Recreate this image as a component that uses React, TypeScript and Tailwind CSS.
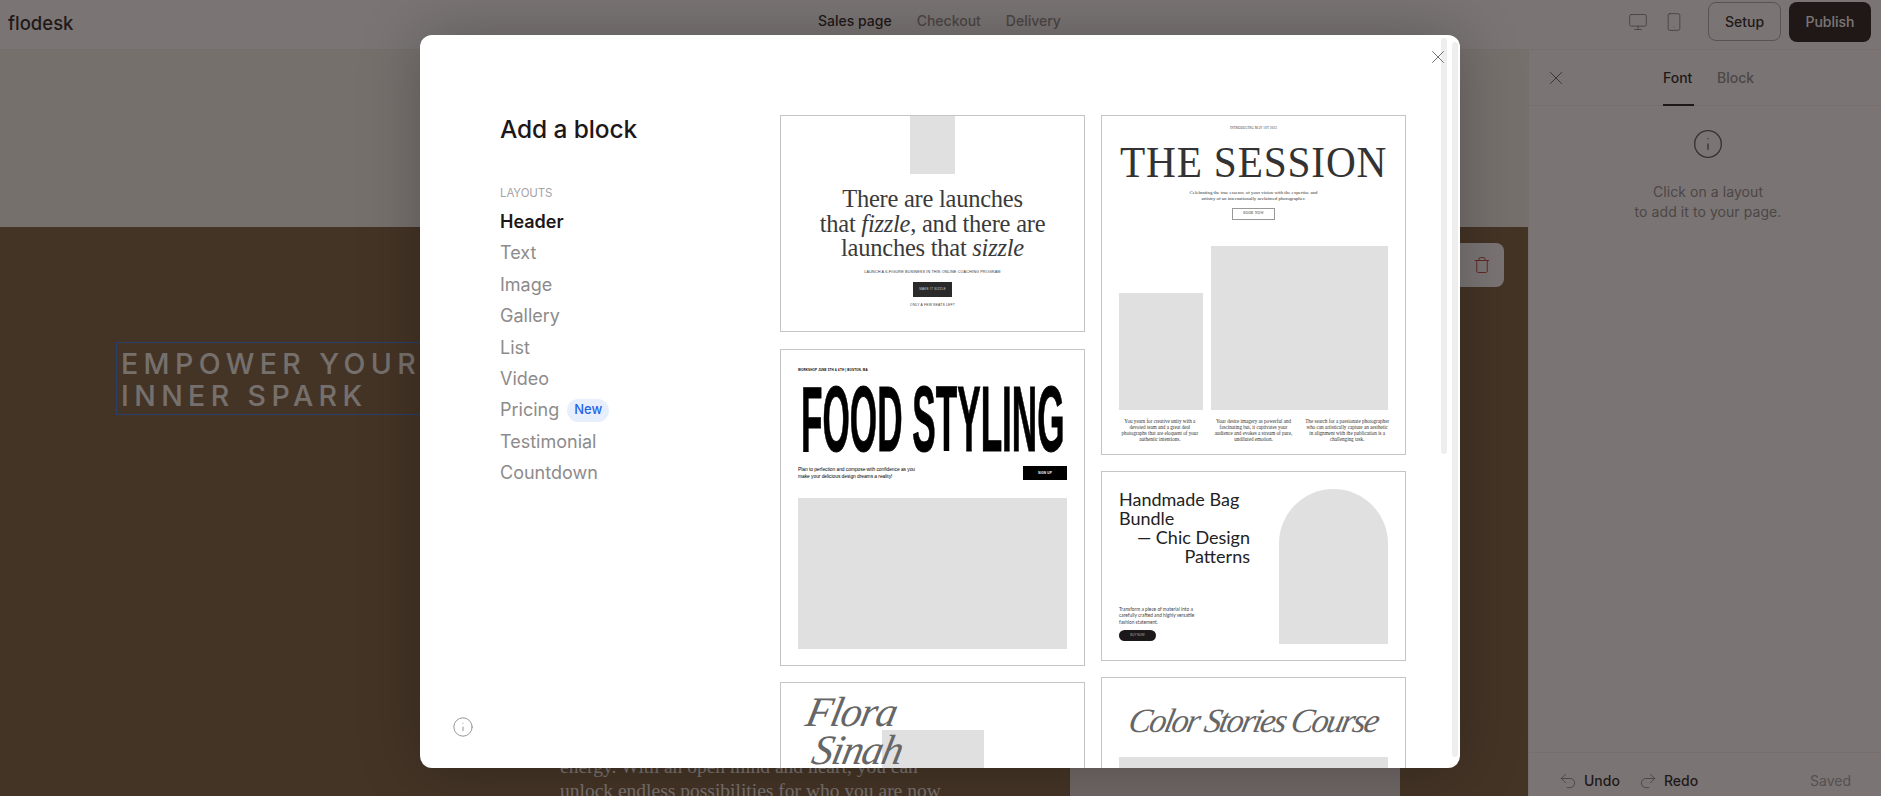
import { X, Info, Monitor, Smartphone, Trash, Undo2, Redo2 } from "lucide-react";

const ui = "font-['Inter','Liberation_Sans',sans-serif]";
const serif = "font-['Liberation_Serif',serif]";
const sans = "font-['Liberation_Sans',sans-serif]";

function Card({ className, children }: { className: string; children: React.ReactNode }) {
  return <div className={`w-[305px] shrink-0 border border-[#c4c4c4] bg-white overflow-hidden ${className}`}>{children}</div>;
}

function FizzleCard() {
  return (
    <Card className="h-[217px] flex flex-col items-center text-[#3a3a3a]">
      <div className="w-[45px] h-[58px] bg-[#e0e0e0]" />
      <div className={`${serif} mt-[13px] text-[24.5px] leading-[24.5px] text-center tracking-[-0.01em]`}>
        <div>There are launches</div>
        <div>that <i>fizzle</i>, and there are</div>
        <div>launches that <i>sizzle</i></div>
      </div>
      <div className={`${sans} mt-[8px] text-[3.8px] leading-[6px] tracking-[0.03em]`}>LAUNCH A 6-FIGURE BUSINESS IN THIS ONLINE COACHING PROGRAM</div>
      <div className={`${sans} mt-[7px] w-[39px] h-[15px] bg-[#2a2a2a] text-[#ccc] text-[3.2px] flex items-center justify-center tracking-[0.05em]`}>MAKE IT SIZZLE</div>
      <div className={`${sans} mt-[5px] text-[3.4px] leading-[6px] tracking-[0.05em]`}>ONLY A FEW SEATS LEFT</div>
    </Card>
  );
}

function FoodCard() {
  return (
    <Card className="h-[317px] mt-[17px] px-[17px] text-black">
      <div className={`${sans} mt-[18px] text-[3px] leading-[5px] font-bold tracking-[0.05em]`}>WORKSHOP JUNE 5TH &amp; 6TH | BOSTON, MA</div>
      <div className="mt-[12px] h-[68px] pl-[3px]">
        <div className={`${sans} font-bold text-[92px] leading-[68px] whitespace-nowrap origin-left scale-x-[0.382] [-webkit-text-stroke:1px_black] w-[700px]`}>FOOD STYLING</div>
      </div>
      <div className="mt-[13px] flex justify-between items-center">
        <div className={`${sans} text-[4.9px] leading-[7px] tracking-[-0.01em]`}>
          <div>Plan to perfection and compose with confidence as you</div>
          <div>make your delicious design dreams a reality!</div>
        </div>
        <div className={`${sans} w-[44px] h-[14px] bg-black text-white text-[3.2px] font-bold flex items-center justify-center tracking-[0.05em]`}>SIGN UP</div>
      </div>
      <div className="mt-[18px] h-[151px] bg-[#e0e0e0]" />
    </Card>
  );
}

function FloraCard() {
  return (
    <Card className="h-[120px] mt-[16px] pl-[22px] relative">
      <div className="absolute left-[101px] top-[47px] w-[102px] h-[60px] bg-[#e0e0e0]" />
      <div className={`${serif} relative italic text-[42px] leading-[38px] mt-[10px] text-[#666] tracking-[-0.03em] -skew-x-12`}>
        <div>Flora</div>
        <div className="pl-[14px]">Sinah</div>
      </div>
    </Card>
  );
}

function SessionCard() {
  return (
    <Card className="h-[340px] px-[17px] text-[#333]">
      <div className={`${serif} mt-[10px] text-center text-[3.2px] leading-[5px] tracking-[0.05em]`}>INTRODUCING MAY 1ST 2023</div>
      <div className="mt-[13px] flex justify-center">
        <div className={`${serif} shrink-0 text-[45px] leading-[36px] tracking-[0.02em] whitespace-nowrap scale-x-[0.918]`}>THE SESSION</div>
      </div>
      <div className={`${serif} mt-[10px] text-center text-[4.9px] leading-[6px]`}>
        <div>Celebrating the true essence of your vision with the expertise and</div>
        <div>artistry of an internationally acclaimed photographer.</div>
      </div>
      <div className={`${serif} mx-auto mt-[6px] w-[43px] h-[12px] border border-[#999] text-[3.4px] flex items-center justify-center tracking-[0.08em]`}>BOOK NOW</div>
      <div className="mt-[26px] flex items-end gap-[8px]">
        <div className="w-[84px] h-[117px] bg-[#e0e0e0]" />
        <div className="w-[177px] h-[164px] bg-[#e0e0e0]" />
      </div>
      <div className={`${serif} mt-[8px] grid grid-cols-3 gap-[8px] -mx-[2px] text-center text-[5.1px] leading-[6px]`}>
        <div>You yearn for creative unity with a devoted team and a great deal photographs that are eloquent of your authentic intentions.</div>
        <div>Your desire imagery as powerful and fascinating but, it captivates your audience and evokes a stream of pure, undiluted emotion.</div>
        <div>The search for a passionate photographer who can artistically capture an aesthetic in alignment with the publication is a challenging task.</div>
      </div>
    </Card>
  );
}

function BagCard() {
  return (
    <Card className="h-[190px] mt-[16px] px-[17px] flex justify-between text-[#222]">
      <div className="w-[131px] flex flex-col">
        <div className="mt-[18px] text-[18px] leading-[19px] font-['Lato',sans-serif]">
          <div>Handmade Bag</div>
          <div>Bundle</div>
          <div className="text-right whitespace-nowrap">— Chic Design</div>
          <div className="text-right">Patterns</div>
        </div>
        <div className="mt-[40px] text-[4.8px] leading-[6.3px] font-['Lato',sans-serif] text-[#444]">
          <div>Transform a piece of material into a</div>
          <div>carefully crafted and highly versatile</div>
          <div>fashion statement.</div>
        </div>
        <div className="mt-[5px] w-[37px] h-[11px] rounded-full bg-[#1c1718] text-[#aaa] text-[3px] flex items-center justify-center font-['Lato',sans-serif]">BUY NOW</div>
      </div>
      <div className="mt-[17px] w-[109px] h-[155px] rounded-t-[55px] bg-[#e0e0e0]" />
    </Card>
  );
}

function ColorCard() {
  return (
    <Card className="h-[120px] mt-[16px] px-[17px]">
      <div className={`${serif} italic mt-[20px] text-[34px] leading-[46px] text-center whitespace-nowrap text-[#666] tracking-[-0.06em] -skew-x-12`}>Color Stories Course</div>
      <div className="mt-[13px] h-[60px] bg-[#e0e0e0]" />
    </Card>
  );
}

const items = ["Text", "Image", "Gallery", "List", "Video"];

function Modal() {
  return (
    <div className={`absolute left-[420px] top-[35px] w-[1040px] h-[733px] bg-white rounded-[12px] overflow-hidden flex shadow-[0_0_60px_rgba(0,0,0,0.25)] ${ui}`}>
      <div className="w-[360px] shrink-0 pl-[80px] flex flex-col relative">
        <div className="mt-[79px] text-[24.5px] leading-[30px] font-medium text-[#1d1718] tracking-[-0.005em]">Add a block</div>
        <div className="mt-[41px] text-[11.5px] leading-[16px] text-[#a6a3a3] tracking-[-0.01em]">LAYOUTS</div>
        <div className="mt-[5px] text-[18px] leading-[31.4px] text-[#8d8b8b]">
          <div className="font-semibold text-[#1d1718]">Header</div>
          {items.map((t) => <div key={t}>{t}</div>)}
          <div className="flex items-center gap-[8px]">
            Pricing
            <span className="h-[23px] w-[42px] rounded-full bg-[#e8effc] text-[#2563eb] text-[13px] font-medium flex items-center justify-center">New</span>
          </div>
          <div>Testimonial</div>
          <div>Countdown</div>
        </div>
        <Info className="absolute left-[32px] top-[681px] text-[#8d8b8b]" size={22} strokeWidth={1} />
      </div>
      <div className="mt-[80px] flex gap-[16px] items-start">
        <div className="flex flex-col"><FizzleCard /><FoodCard /><FloraCard /></div>
        <div className="flex flex-col"><SessionCard /><BagCard /><ColorCard /></div>
      </div>
      <div className="absolute right-[13px] top-[3px] w-[6px] h-[416px] rounded-full bg-[#eeeeee]" />
      <div className="absolute right-[2px] top-[7px] w-[6px] h-[715px] rounded-full bg-[#eeeeee]" />
      <X className="absolute left-[1007px] top-[11px] text-[#666]" size={22} strokeWidth={1} />
    </div>
  );
}

function Page() {
  return (
    <div className={`w-[1881px] h-[796px] flex flex-col bg-white ${ui}`}>
      <div className="h-[50px] shrink-0 flex items-center relative border-b border-[#f2eeee]">
        <div className="pl-[8px] text-[18.5px] font-medium text-[#1d1718] mb-[2px]">flodesk</div>
        <div className="absolute left-[818px] top-[11px] flex gap-[25px] text-[14px] leading-[20px] font-medium text-[#8d8b8b]">
          <span className="text-[#1d1718]">Sales page</span><span>Checkout</span><span>Delivery</span>
        </div>
        <div className="ml-auto flex items-center pr-[10px] mb-[6px]">
          <Monitor size={20} strokeWidth={1} className="text-[#777] mr-[16px]" />
          <Smartphone size={20} strokeWidth={1} className="text-[#777] mr-[24px]" />
          <div className="w-[73px] h-[39px] border border-[#aaa] rounded-[8px] flex items-center justify-center text-[14px] font-medium text-[#1d1718]">Setup</div>
          <div className="ml-[8px] w-[82px] h-[40px] rounded-[8px] bg-[#1d1718] text-[#fff] text-[14px] font-medium flex items-center justify-center">Publish</div>
        </div>
      </div>
      <div className="flex-1 flex min-h-0">
        <div className="w-[1528px] flex flex-col">
          <div className="h-[177px] bg-[#f5f3ee]" />
          <div className="flex-1 bg-[#785c3c] relative overflow-hidden">
            <div className="absolute left-[116px] top-[115px] w-[400px] h-[73px] border border-[#3a78ea] pl-[4px] pt-[5px] text-[#f5f3ee] text-[28.5px] leading-[32px] tracking-[0.19em] font-medium whitespace-nowrap">
              <div>EMPOWER YOUR</div><div>INNER SPARK</div>
            </div>
            <div className={`absolute left-[560px] top-[528px] ${serif} text-[19.5px] leading-[24px] text-[#f5f3ee] whitespace-nowrap`}>
              <div>energy. With an open mind and heart, you can</div>
              <div>unlock endless possibilities for who you are now</div>
            </div>
            <div className="absolute left-[1070px] top-[500px] w-[330px] h-[250px] bg-[#e0ddd9]" />
            <div className="absolute left-[1300px] top-[16px] w-[204px] h-[44px] rounded-[8px] bg-[#fff] flex items-center justify-end pr-[13px]">
              <Trash size={18} strokeWidth={1.25} className="text-[#c0392b]" />
            </div>
          </div>
        </div>
        <div className="flex-1 flex flex-col bg-white relative border-l border-[#f2eeee]">
          <div className="h-[56px] border-b border-[#f2eeee] relative text-[14px] font-medium text-[#8d8b8b]">
            <X size={22} strokeWidth={1} className="absolute left-[16px] top-[17px] text-[#555]" />
            <div className="absolute left-[134px] top-[17px] h-[39px] w-[31px] border-b-2 border-[#1d1718] text-[#1d1718]">Font</div>
            <div className="absolute left-[188px] top-[17px]">Block</div>
          </div>
          <div className="flex flex-col items-center mt-[22px] pl-[6px]">
            <Info size={32} strokeWidth={1} className="text-[#555]" />
            <div className="mt-[22px] text-[14px] leading-[20px] tracking-[0.005em] text-center text-[#8d8b8b]">Click on a layout<br />to add it to your page.</div>
          </div>
          <div className="mt-auto h-[44px] border-t border-[#f2eeee] flex items-center pt-[12px] pl-[29px] pr-[30px] text-[14px] font-medium text-[#1d1718]">
            <Undo2 size={20} strokeWidth={1} className="text-[#777] mr-[6px]" />Undo
            <Redo2 size={20} strokeWidth={1} className="text-[#777] ml-[18px] mr-[6px]" />Redo
            <span className="ml-auto font-normal text-[#a6a3a3]">Saved</span>
          </div>
        </div>
      </div>
    </div>
  );
}

export default function App() {
  return (
    <div className="relative w-[1881px] h-[796px] overflow-hidden">
      <Page />
      <div className="absolute inset-0 bg-[#211917]/60" />
      <Modal />
    </div>
  );
}
